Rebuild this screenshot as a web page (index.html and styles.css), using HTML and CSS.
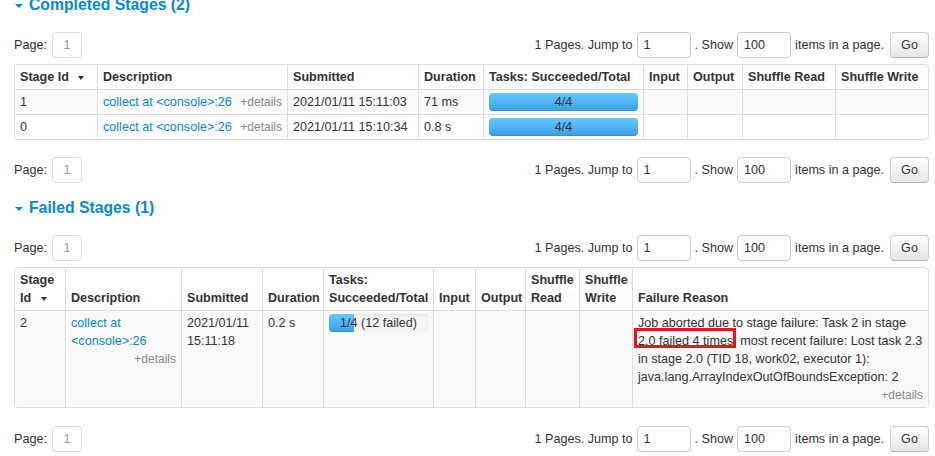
FILE: index.html
```html
<!DOCTYPE html>
<html>
<head>
<meta charset="utf-8">
<link rel="stylesheet" href="styles.css">
</head>
<body>
<div class="page">
  <section class="section">
    <h4 class="heading"><span class="caret"></span>Completed Stages (2)</h4>
    <div class="pager">
      <div class="pager-left"><span>Page:</span><span class="page-box">1</span></div>
      <div class="pager-right">
        <span>1 Pages. Jump to</span><span class="field">1</span><span>. Show</span><span class="field">100</span><span>items in a page.</span><span class="btn">Go</span>
      </div>
    </div>
    <table class="stages">
      <thead>
        <tr>
          <th class="c1-id">Stage Id <span class="sort"></span></th>
          <th class="c1-desc">Description</th>
          <th class="c1-sub">Submitted</th>
          <th class="c1-dur">Duration</th>
          <th class="c1-tasks">Tasks: Succeeded/Total</th>
          <th class="c1-in">Input</th>
          <th class="c1-out">Output</th>
          <th class="c1-sr">Shuffle Read</th>
          <th class="c1-sw">Shuffle Write</th>
        </tr>
      </thead>
      <tbody>
        <tr class="odd">
          <td>1</td>
          <td><span class="link">collect at &lt;console&gt;:26</span><span class="details inline">+details</span></td>
          <td>2021/01/11 15:11:03</td>
          <td>71 ms</td>
          <td><div class="progress"><div class="bar" style="width:100%"></div><span class="progress-text">4/4</span></div></td>
          <td></td><td></td><td></td><td></td>
        </tr>
        <tr>
          <td>0</td>
          <td><span class="link">collect at &lt;console&gt;:26</span><span class="details inline">+details</span></td>
          <td>2021/01/11 15:10:34</td>
          <td>0.8 s</td>
          <td><div class="progress"><div class="bar" style="width:100%"></div><span class="progress-text">4/4</span></div></td>
          <td></td><td></td><td></td><td></td>
        </tr>
      </tbody>
    </table>
    <div class="pager pager-after">
      <div class="pager-left"><span>Page:</span><span class="page-box">1</span></div>
      <div class="pager-right">
        <span>1 Pages. Jump to</span><span class="field">1</span><span>. Show</span><span class="field">100</span><span>items in a page.</span><span class="btn">Go</span>
      </div>
    </div>
  </section>

  <section class="section">
    <h4 class="heading"><span class="caret"></span>Failed Stages (1)</h4>
    <div class="pager">
      <div class="pager-left"><span>Page:</span><span class="page-box">1</span></div>
      <div class="pager-right">
        <span>1 Pages. Jump to</span><span class="field">1</span><span>. Show</span><span class="field">100</span><span>items in a page.</span><span class="btn">Go</span>
      </div>
    </div>
    <table class="stages">
      <thead>
        <tr>
          <th class="c2-id">Stage Id <span class="sort"></span></th>
          <th class="c2-desc">Description</th>
          <th class="c2-sub">Submitted</th>
          <th class="c2-dur">Duration</th>
          <th class="c2-tasks">Tasks: Succeeded/Total</th>
          <th class="c2-in">Input</th>
          <th class="c2-out">Output</th>
          <th class="c2-sr">Shuffle Read</th>
          <th class="c2-sw">Shuffle Write</th>
          <th class="c2-fr">Failure Reason</th>
        </tr>
      </thead>
      <tbody>
        <tr class="odd tall">
          <td>2</td>
          <td><span class="link">collect at &lt;console&gt;:26</span><div class="details block">+details</div></td>
          <td>2021/01/11 15:11:18</td>
          <td>0.2 s</td>
          <td><div class="progress"><div class="bar" style="width:25%"></div><span class="progress-text">1/4 (12 failed)</span></div></td>
          <td></td><td></td><td></td><td></td>
          <td>Job aborted due to stage failure: Task 2 in stage <span class="mark">2.0 failed 4 times</span>, most recent failure: Lost task 2.3 in stage 2.0 (TID 18, work02, executor 1): java.lang.ArrayIndexOutOfBoundsException: 2<div class="details block">+details</div></td>
        </tr>
      </tbody>
    </table>
    <div class="pager pager-after last">
      <div class="pager-left"><span>Page:</span><span class="page-box">1</span></div>
      <div class="pager-right">
        <span>1 Pages. Jump to</span><span class="field">1</span><span>. Show</span><span class="field">100</span><span>items in a page.</span><span class="btn">Go</span>
      </div>
    </div>
  </section>
</div>
</body>
</html>
```

FILE: styles.css
```css
* { box-sizing: border-box; }

html, body {
  margin: 0;
  padding: 0;
  background: #fff;
}

body {
  font-family: "Liberation Sans", Arial, sans-serif;
  font-size: 12.6px;
  line-height: 18px;
  color: #333;
  overflow: hidden;
}

.page {
  padding: 0 6px 0 14px;
  margin-top: -5px;
}

.heading {
  margin: 0 0 17px 0;
  font-size: 15.75px;
  line-height: 20px;
  font-weight: bold;
  color: #0a87cf;
  display: flex;
  align-items: center;
}

.section + .section .heading {
  margin-top: 15px;
}

.caret {
  display: inline-block;
  width: 0;
  height: 0;
  border-left: 4px solid transparent;
  border-right: 4px solid transparent;
  border-top: 4px solid #0a87cf;
  margin: 1px 6px 0 1px;
}

.pager {
  display: flex;
  justify-content: space-between;
  align-items: center;
  height: 26px;
  margin-bottom: 6px;
}

.pager-after {
  margin-top: 17px;
  margin-bottom: 0;
}

.pager-after.last {
  margin-top: 18px;
}

.pager-left {
  display: flex;
  align-items: center;
  gap: 5px;
}

.page-box {
  display: inline-flex;
  align-items: center;
  justify-content: center;
  width: 30px;
  height: 26px;
  border: 1px solid #ddd;
  border-radius: 4px;
  color: #999;
}

.pager-right {
  display: flex;
  align-items: center;
  gap: 4px;
}

.field {
  display: inline-flex;
  align-items: center;
  width: 54px;
  height: 26px;
  padding-left: 6px;
  border: 1px solid #ccc;
  border-radius: 4px;
  color: #333;
  background: #fff;
}

.btn {
  display: inline-flex;
  align-items: center;
  justify-content: center;
  height: 26px;
  width: 39px;
  margin-left: 2px;
  border: 1px solid #ccc;
  border-bottom-color: #b3b3b3;
  border-radius: 4px;
  background: linear-gradient(#ffffff, #e6e6e6);
  color: #333;
}

.stages {
  width: 915px;
  table-layout: fixed;
  border-collapse: separate;
  border-spacing: 0;
  border: 1px solid #ddd;
  border-radius: 4px;
}

.stages th,
.stages td {
  padding: 3px 5px;
  text-align: left;
  border-left: 1px solid #ddd;
  border-top: 1px solid #ddd;
}

.stages th {
  font-weight: bold;
  vertical-align: bottom;
  border-top: none;
}

.stages td {
  vertical-align: top;
}

.stages th:first-child,
.stages td:first-child {
  border-left: none;
}

.stages tr.odd td {
  background: #f9f9f9;
}

.sort {
  display: inline-block;
  width: 0;
  height: 0;
  border-left: 3px solid transparent;
  border-right: 3px solid transparent;
  border-top: 4px solid #333;
  margin-left: 6px;
  vertical-align: middle;
}

.c1-id { width: 82px; }
.c1-desc { width: 190px; }
.c1-sub { width: 131px; }
.c1-dur { width: 65px; }
.c1-tasks { width: 160px; }
.c1-in { width: 44px; }
.c1-out { width: 55px; }
.c1-sr { width: 93px; }
.c1-sw { width: 93px; }

.c2-id { width: 50px; }
.c2-desc { width: 116px; }
.c2-sub { width: 81px; }
.c2-dur { width: 61px; }
.c2-tasks { width: 110px; }
.c2-in { width: 42px; }
.c2-out { width: 50px; }
.c2-sr { width: 54px; }
.c2-sw { width: 53px; }
.c2-fr { width: 296px; }

.link {
  color: #0a87cf;
}

.details {
  color: #888;
  font-size: 12px;
}

.details.inline {
  float: right;
}

.details.block {
  text-align: right;
}

.progress {
  position: relative;
  height: 18px;
  border-radius: 4px;
  background: #f5f5f5;
  box-shadow: inset 0 1px 2px rgba(0, 0, 0, 0.08);
  overflow: hidden;
}

.bar {
  height: 100%;
  background: linear-gradient(#68c8ff, #3ba1e8);
  border-bottom: 1px solid #3a90d0;
}

.progress-text {
  position: absolute;
  left: 0;
  right: 0;
  top: 0;
  line-height: 18px;
  text-align: center;
  color: #333;
  white-space: nowrap;
}

.mark {
  position: relative;
}

.mark::after {
  content: "";
  position: absolute;
  left: -4px;
  right: -3px;
  top: -6px;
  bottom: 0;
  border: 3px solid #e3171f;
}
```
